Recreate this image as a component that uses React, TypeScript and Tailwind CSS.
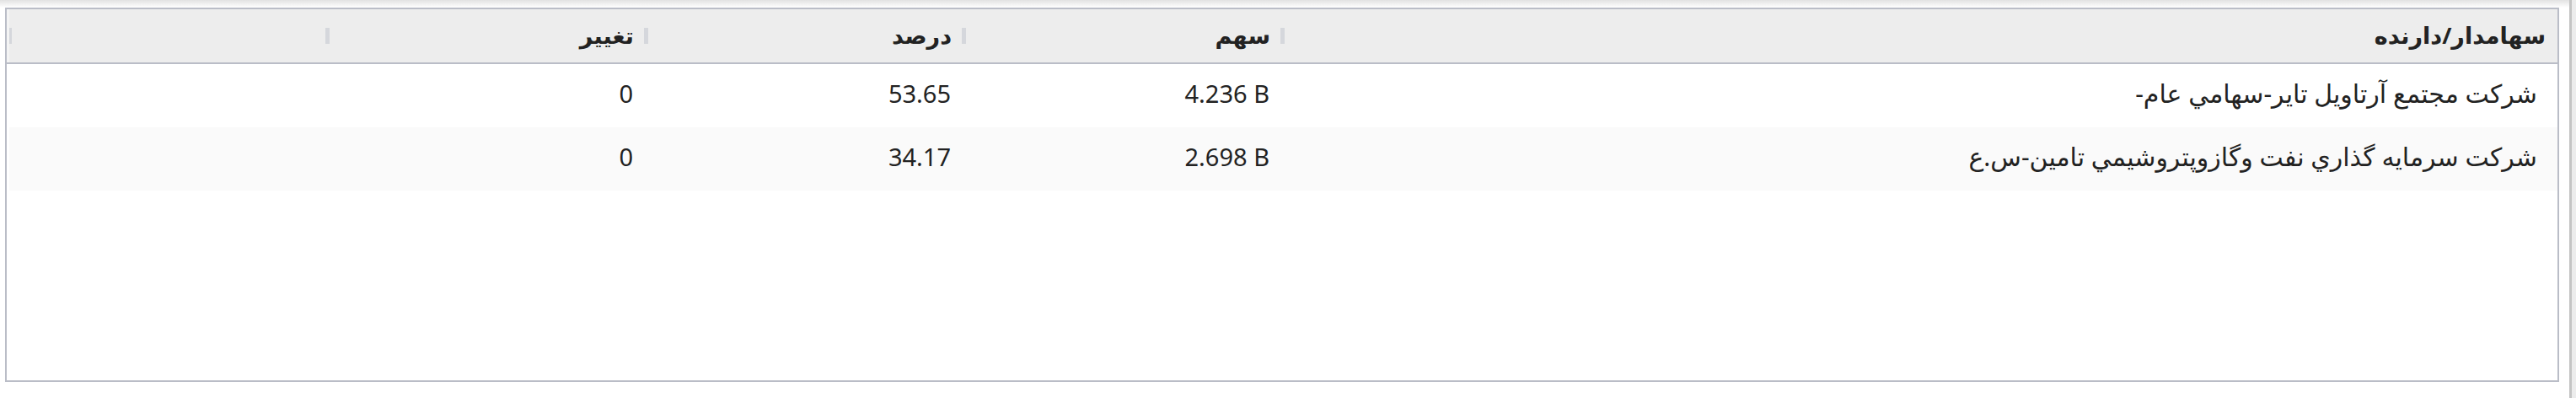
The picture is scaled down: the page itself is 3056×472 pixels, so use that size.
import React from 'react'

type Holder = {
  name: string
  shares: string
  percent: string
  change: string
}

const holders: Holder[] = [
  {
    name: 'شركت مجتمع آرتاويل تاير-سهامي عام-',
    shares: '4.236 B',
    percent: '53.65',
    change: '0',
  },
  {
    name: 'شركت سرمايه گذاري نفت وگازوپتروشيمي تامين-س.ع',
    shares: '2.698 B',
    percent: '34.17',
    change: '0',
  },
]

const columns = [
  { title: 'سهم', width: 'w-[378px]' },
  { title: 'درصد', width: 'w-[377px]' },
  { title: 'تغيير', width: 'w-[378px]' },
  { title: '', width: 'w-[377px]' },
]

function Handle({ narrow }: { narrow?: boolean }) {
  return (
    <span
      className={`h-[19px] shrink-0 bg-[#d5d7dc] ${narrow ? 'w-[3px]' : 'w-[5px]'}`}
    />
  )
}

export default function App() {
  return (
    <div className="flex h-[472px] w-[3056px] bg-white font-['Noto_Sans','DejaVu_Sans',sans-serif] text-[#222]">
      <div className="flex flex-1 flex-col">
        <div className="h-[9px] bg-gradient-to-b from-[#e2e2e2] to-white" />
        <div className="ml-[6px] mr-[12px] flex h-[444px] flex-col border-2 border-[#babdc7]">
          {/* header */}
          <div
            dir="rtl"
            className="box-content flex h-[63px] shrink-0 border-b-2 border-[#babdc7] bg-[#ededed]"
          >
            <div className="flex flex-1 items-center pr-[14px]">
              <span className="text-[27px] font-bold">سهامدار/دارنده</span>
            </div>
            {columns.map((c, i) => (
              <div key={i} className={`flex items-center ${c.width}`}>
                <Handle />
                <span className="pr-[12px] text-[27px] font-bold">{c.title}</span>
              </div>
            ))}
            <div className="flex w-[3px] items-center">
              <Handle narrow />
            </div>
            <div className="w-[3px] bg-[#f4f4f4]" />
          </div>

          {/* rows */}
          <div className="flex-1 pl-[3px]">
            {holders.map((h, i) => (
              <div
                key={i}
                dir="rtl"
                className={`flex h-[75px] items-center pb-[6px] text-[29px] leading-[40px] ${i % 2 === 1 ? 'bg-[#fafafa]' : 'bg-white'}`}
              >
                <div className="flex-1 pr-[24px] text-[30px]">{h.name}</div>
                <div dir="ltr" className="w-[378px] pr-[18px] text-right">
                  {h.shares}
                </div>
                <div dir="ltr" className="w-[377px] pr-[18px] text-right">
                  {h.percent}
                </div>
                <div dir="ltr" className="w-[378px] pr-[18px] text-right">
                  {h.change}
                </div>
                <div className="w-[377px]" />
                <div className="w-[3px]" />
              </div>
            ))}
          </div>
        </div>
      </div>
      <div className="flex w-[8px]">
        <div className="w-[3px] bg-[#c4c4c4]" />
        <div className="flex-1 bg-[#ececec]" />
      </div>
    </div>
  )
}
